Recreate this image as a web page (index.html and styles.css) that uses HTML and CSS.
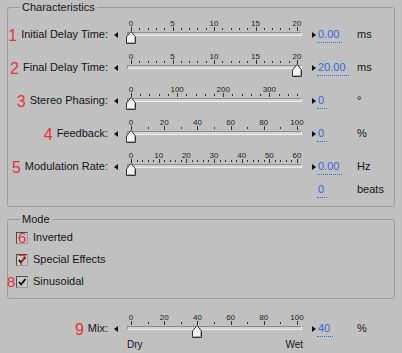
FILE: index.html
```html
<!DOCTYPE html>
<html lang="en">

<head>
  <meta charset="UTF-8">
  <title>Chorus</title>
  <link rel="stylesheet" href="styles.css">
</head>

<body>
  <fieldset class="group">
    <legend>Characteristics</legend>

    <div class="param">
      <label class="param-name"><span class="callout">1</span>Initial Delay Time:</label>
      <span class="nudge nudge-left"></span>
      <div class="slider" data-min="0" data-max="20" data-major="5" data-minor="1" data-value="0">
        <div class="scale-labels"></div>
        <div class="scale-ticks"></div>
        <div class="track"></div>
        <div class="thumb-rail">
          <svg class="thumb" viewBox="0 0 10 13"><path d="M5 .5L9.5 6V12.5H.5V6Z" fill="#f2f2f2" stroke="#333"/><path d="M8.5 6.5V11.5H1.5" fill="none" stroke="#a8a8a8"/></svg>
        </div>
      </div>
      <span class="nudge nudge-right"></span>
      <span class="value">0.00</span>
      <span class="unit">ms</span>
    </div>

    <div class="param">
      <label class="param-name"><span class="callout">2</span>Final Delay Time:</label>
      <span class="nudge nudge-left"></span>
      <div class="slider" data-min="0" data-max="20" data-major="5" data-minor="1" data-value="20">
        <div class="scale-labels"></div>
        <div class="scale-ticks"></div>
        <div class="track"></div>
        <div class="thumb-rail">
          <svg class="thumb" viewBox="0 0 10 13"><path d="M5 .5L9.5 6V12.5H.5V6Z" fill="#f2f2f2" stroke="#333"/><path d="M8.5 6.5V11.5H1.5" fill="none" stroke="#a8a8a8"/></svg>
        </div>
      </div>
      <span class="nudge nudge-right"></span>
      <span class="value">20.00</span>
      <span class="unit">ms</span>
    </div>

    <div class="param">
      <label class="param-name"><span class="callout">3</span>Stereo Phasing:</label>
      <span class="nudge nudge-left"></span>
      <div class="slider" data-min="0" data-max="360" data-major="100" data-minor="20" data-value="0">
        <div class="scale-labels"></div>
        <div class="scale-ticks"></div>
        <div class="track"></div>
        <div class="thumb-rail">
          <svg class="thumb" viewBox="0 0 10 13"><path d="M5 .5L9.5 6V12.5H.5V6Z" fill="#f2f2f2" stroke="#333"/><path d="M8.5 6.5V11.5H1.5" fill="none" stroke="#a8a8a8"/></svg>
        </div>
      </div>
      <span class="nudge nudge-right"></span>
      <span class="value">0</span>
      <span class="unit">°</span>
    </div>

    <div class="param">
      <label class="param-name"><span class="callout">4</span>Feedback:</label>
      <span class="nudge nudge-left"></span>
      <div class="slider" data-min="0" data-max="100" data-major="20" data-minor="10" data-value="0">
        <div class="scale-labels"></div>
        <div class="scale-ticks"></div>
        <div class="track"></div>
        <div class="thumb-rail">
          <svg class="thumb" viewBox="0 0 10 13"><path d="M5 .5L9.5 6V12.5H.5V6Z" fill="#f2f2f2" stroke="#333"/><path d="M8.5 6.5V11.5H1.5" fill="none" stroke="#a8a8a8"/></svg>
        </div>
      </div>
      <span class="nudge nudge-right"></span>
      <span class="value">0</span>
      <span class="unit">%</span>
    </div>

    <div class="param">
      <label class="param-name"><span class="callout">5</span>Modulation Rate:</label>
      <span class="nudge nudge-left"></span>
      <div class="slider" data-min="0" data-max="60" data-major="10" data-minor="2" data-value="0">
        <div class="scale-labels"></div>
        <div class="scale-ticks"></div>
        <div class="track"></div>
        <div class="thumb-rail">
          <svg class="thumb" viewBox="0 0 10 13"><path d="M5 .5L9.5 6V12.5H.5V6Z" fill="#f2f2f2" stroke="#333"/><path d="M8.5 6.5V11.5H1.5" fill="none" stroke="#a8a8a8"/></svg>
        </div>
      </div>
      <span class="nudge nudge-right"></span>
      <span class="value">0.00</span>
      <span class="unit">Hz</span>
    </div>

    <div class="param param-extra">
      <span class="value">0</span>
      <span class="unit">beats</span>
    </div>
  </fieldset>

  <fieldset class="group mode">
    <legend>Mode</legend>
    <div class="check">
      <span class="box"><span class="callout">6</span></span>
      <span>Inverted</span>
    </div>
    <div class="check">
      <span class="box checked"><svg viewBox="0 0 10 10"><path d="M2 5l2 2.5L8.5 2" fill="none" stroke="#000" stroke-width="1.6"/></svg><span class="callout">7</span></span>
      <span>Special Effects</span>
    </div>
    <div class="check">
      <span class="box checked"><svg viewBox="0 0 10 10"><path d="M2 5l2 2.5L8.5 2" fill="none" stroke="#000" stroke-width="1.6"/></svg><span class="callout callout-side">8</span></span>
      <span>Sinusoidal</span>
    </div>
  </fieldset>

  <div class="param param-mix">
    <label class="param-name"><span class="callout">9</span>Mix:</label>
    <span class="nudge nudge-left"></span>
    <div class="slider" data-min="0" data-max="100" data-major="20" data-minor="10" data-value="40">
      <div class="scale-labels"></div>
      <div class="scale-ticks"></div>
      <div class="track"></div>
      <div class="thumb-rail">
        <svg class="thumb" viewBox="0 0 10 13"><path d="M5 .5L9.5 6V12.5H.5V6Z" fill="#f2f2f2" stroke="#333"/><path d="M8.5 6.5V11.5H1.5" fill="none" stroke="#a8a8a8"/></svg>
      </div>
      <div class="slider-foot">
        <span>Dry</span>
        <span>Wet</span>
      </div>
    </div>
    <span class="nudge nudge-right"></span>
    <span class="value">40</span>
    <span class="unit">%</span>
  </div>

  <script src="script.js"></script>
</body>

</html>
```

FILE: styles.css
```css
body {
  margin: 0;
  background: #c0c0c0;
  color: #141414;
  font: 11px/13px "Liberation Sans", Arial, sans-serif;
}

.group {
  margin: 0 7px;
  padding: 4px 0 8px;
  min-width: 0;
  border: 1px solid #9a9a9a;
  border-radius: 3px;
}

.group legend {
  margin-left: 12px;
  padding: 0 2px;
  line-height: 14px;
}

.mode {
  margin-top: 5px;
  padding: 5px 0 1px;
}

.param {
  display: grid;
  grid-template-columns: 100px 18px 177px 14px 40px auto;
  align-items: start;
  height: 33px;
}

.param-name {
  margin-top: 10px;
  text-align: right;
  white-space: nowrap;
}

.callout {
  margin-right: 4px;
  color: #e5323a;
  font-size: 16px;
  line-height: 0;
  vertical-align: -3px;
}

.nudge {
  width: 0;
  height: 0;
  margin-top: 14px;
  border-top: 3px solid transparent;
  border-bottom: 3px solid transparent;
}

.nudge-left {
  margin-left: 6px;
  border-right: 4px solid #111;
}

.nudge-right {
  margin-left: 9px;
  border-left: 4px solid #111;
}

.slider {
  position: relative;
  margin-top: 2px;
}

.scale-labels,
.scale-ticks {
  position: relative;
  margin: 0 6px 0 5px;
}

.scale-labels {
  height: 7px;
  font-size: 8px;
  line-height: 8px;
  color: #222;
}

.scale-labels span {
  position: absolute;
  top: 0;
  transform: translateX(-50%);
}

.scale-ticks {
  height: 4px;
}

.tick {
  position: absolute;
  bottom: 1px;
  width: 1px;
  height: 2px;
  background: #333;
}

.tick.major {
  bottom: 0;
  height: 4px;
}

.track {
  height: 2px;
  margin: 1px 1px 0;
  border: 1px solid;
  border-color: #8c8c8c #eeeeee #eeeeee #8c8c8c;
  background: #d2d2d2;
}

.thumb-rail {
  position: absolute;
  top: 11px;
  left: 5px;
  right: 6px;
  height: 13px;
}

.thumb {
  position: absolute;
  top: 0;
  width: 10px;
  height: 13px;
  transform: translateX(-50%);
}

.value {
  justify-self: start;
  margin-top: 10px;
  padding: 0 3px 1px 1px;
  color: #3a64d8;
  border-bottom: 1px dotted #3a64d8;
}

.unit {
  margin-top: 10px;
}

.param-extra {
  height: 15px;
}

.param-extra .value {
  grid-column: 5;
  margin-top: 0;
}

.param-extra .unit {
  margin-top: 0;
}

.param-mix {
  height: auto;
  margin: 13px 0 0 8px;
}

.slider-foot {
  display: flex;
  justify-content: space-between;
  margin: 8px 0 0 1px;
  font-size: 10px;
  line-height: 13px;
}

.check {
  display: flex;
  align-items: flex-start;
  gap: 5px;
  height: 22px;
  padding-left: 8px;
}

.box {
  position: relative;
  width: 10px;
  height: 10px;
  margin-top: 1px;
  border: 1px solid;
  border-color: #4a4a4a #9a9a9a #9a9a9a #4a4a4a;
  background: #c6c6c6;
}

.box svg {
  display: block;
  width: 10px;
  height: 10px;
}

.box .callout {
  position: absolute;
  top: 5px;
  left: 1px;
  margin: 0;
  font-size: 15px;
  vertical-align: baseline;
}

.box .callout-side {
  left: -10px;
}
```

FILE: script.js
```js
document.querySelectorAll('.slider').forEach(function (slider) {
  var min = Number(slider.dataset.min);
  var max = Number(slider.dataset.max);
  var major = Number(slider.dataset.major);
  var minor = Number(slider.dataset.minor);
  var labels = slider.querySelector('.scale-labels');
  var ticks = slider.querySelector('.scale-ticks');
  var steps = Math.round((max - min) / minor);

  for (var i = 0; i <= steps; i++) {
    var v = min + i * minor;
    var left = ((v - min) / (max - min) * 100) + '%';
    var tick = document.createElement('span');
    tick.className = 'tick';
    if ((v - min) % major === 0) {
      tick.className += ' major';
      var label = document.createElement('span');
      label.textContent = v;
      label.style.left = left;
      labels.appendChild(label);
    }
    tick.style.left = left;
    ticks.appendChild(tick);
  }

  var thumb = slider.querySelector('.thumb');
  thumb.style.left = ((Number(slider.dataset.value) - min) / (max - min) * 100) + '%';
});
```
